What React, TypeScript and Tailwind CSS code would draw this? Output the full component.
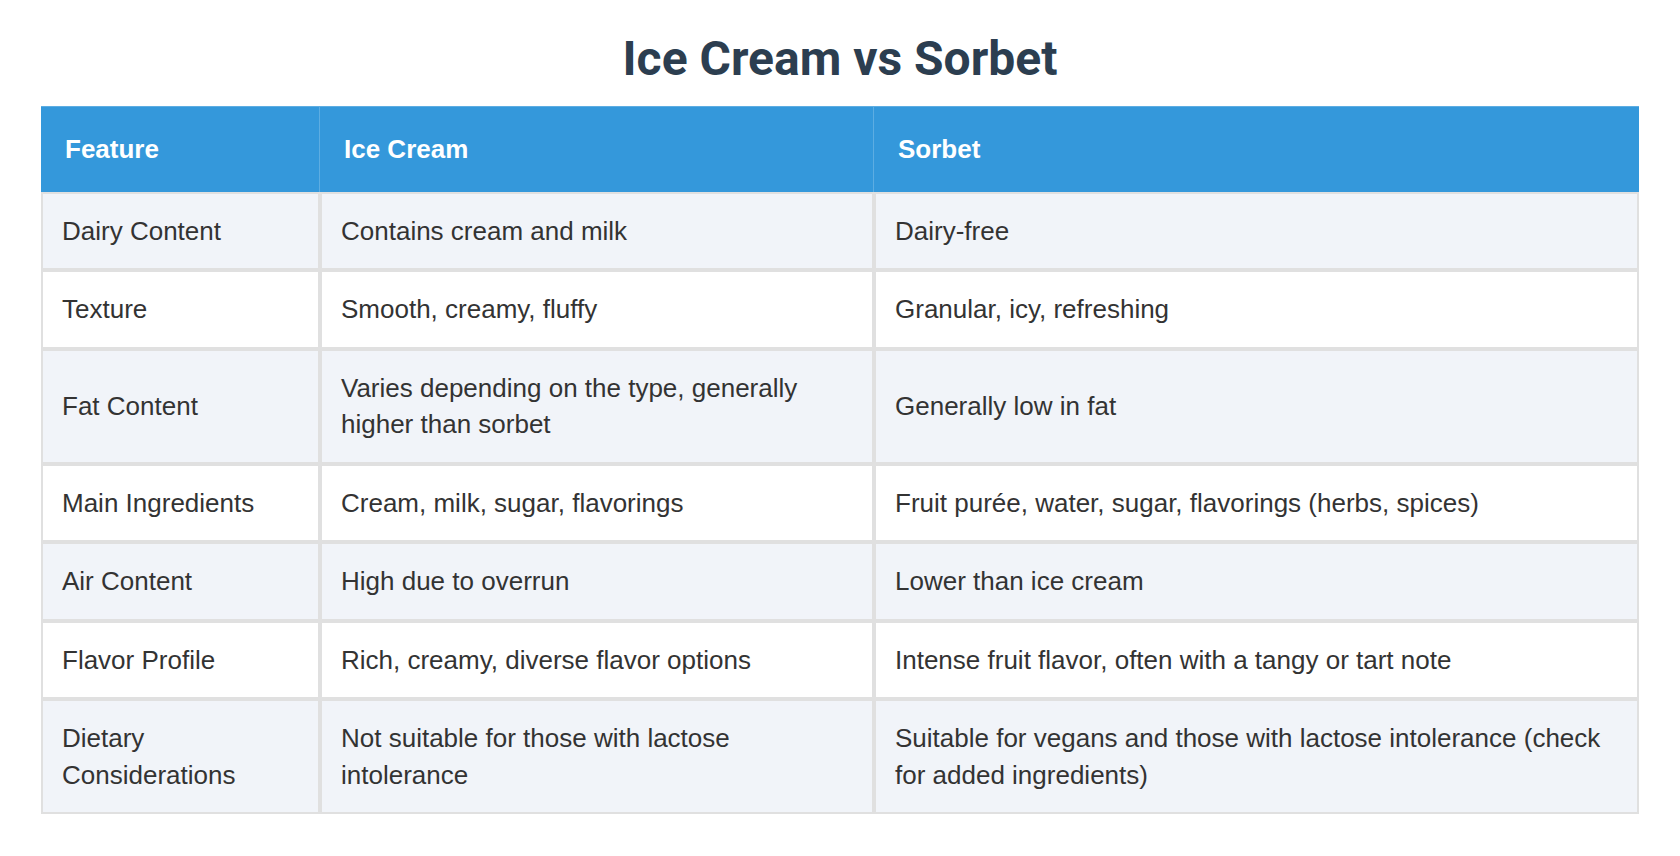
import React from 'react';

type Row = { feature: string; iceCream: string; sorbet: string };

const rows: Row[] = [
  { feature: 'Dairy Content', iceCream: 'Contains cream and milk', sorbet: 'Dairy-free' },
  { feature: 'Texture', iceCream: 'Smooth, creamy, fluffy', sorbet: 'Granular, icy, refreshing' },
  {
    feature: 'Fat Content',
    iceCream: 'Varies depending on the type, generally higher than sorbet',
    sorbet: 'Generally low in fat',
  },
  {
    feature: 'Main Ingredients',
    iceCream: 'Cream, milk, sugar, flavorings',
    sorbet: 'Fruit purée, water, sugar, flavorings (herbs, spices)',
  },
  { feature: 'Air Content', iceCream: 'High due to overrun', sorbet: 'Lower than ice cream' },
  {
    feature: 'Flavor Profile',
    iceCream: 'Rich, creamy, diverse flavor options',
    sorbet: 'Intense fruit flavor, often with a tangy or tart note',
  },
  {
    feature: 'Dietary Considerations',
    iceCream: 'Not suitable for those with lactose intolerance',
    sorbet: 'Suitable for vegans and those with lactose intolerance (check for added ingredients)',
  },
];

const cell = 'border-2 border-[#e0e0e0] px-[19px] py-[19px] align-middle';

export default function App() {
  return (
    <div className="min-h-[856px] bg-white px-[41px] pt-[31px] font-['Liberation_Sans',Arial,sans-serif] text-[#333333]">
      {/* Title */}
      <h1 className="mb-[19px] text-center font-['Roboto',sans-serif] text-[48px] font-bold leading-[56px] text-[#2c3e50]">
        Ice Cream vs Sorbet
      </h1>

      <table className="w-full table-fixed border-separate border-spacing-0 text-left text-[26px] leading-[36.5px]">
        <colgroup>
          <col className="w-[279px]" />
          <col className="w-[554px]" />
          <col />
        </colgroup>
        <thead>
          <tr className="bg-[#3498db] text-white">
            <th className="border-t border-r border-[#5dade2] px-6 py-6 font-bold">Feature</th>
            <th className="border-t border-r border-[#5dade2] px-6 py-6 font-bold">Ice Cream</th>
            <th className="border-t border-[#5dade2] px-6 py-6 font-bold">Sorbet</th>
          </tr>
        </thead>
        <tbody>
          {rows.map((r, i) => (
            <tr key={r.feature} className={i % 2 === 0 ? 'bg-[#f1f4f9]' : 'bg-white'}>
              <td className={cell}>{r.feature}</td>
              <td className={cell}>{r.iceCream}</td>
              <td className={cell}>{r.sorbet}</td>
            </tr>
          ))}
        </tbody>
      </table>
    </div>
  );
}
